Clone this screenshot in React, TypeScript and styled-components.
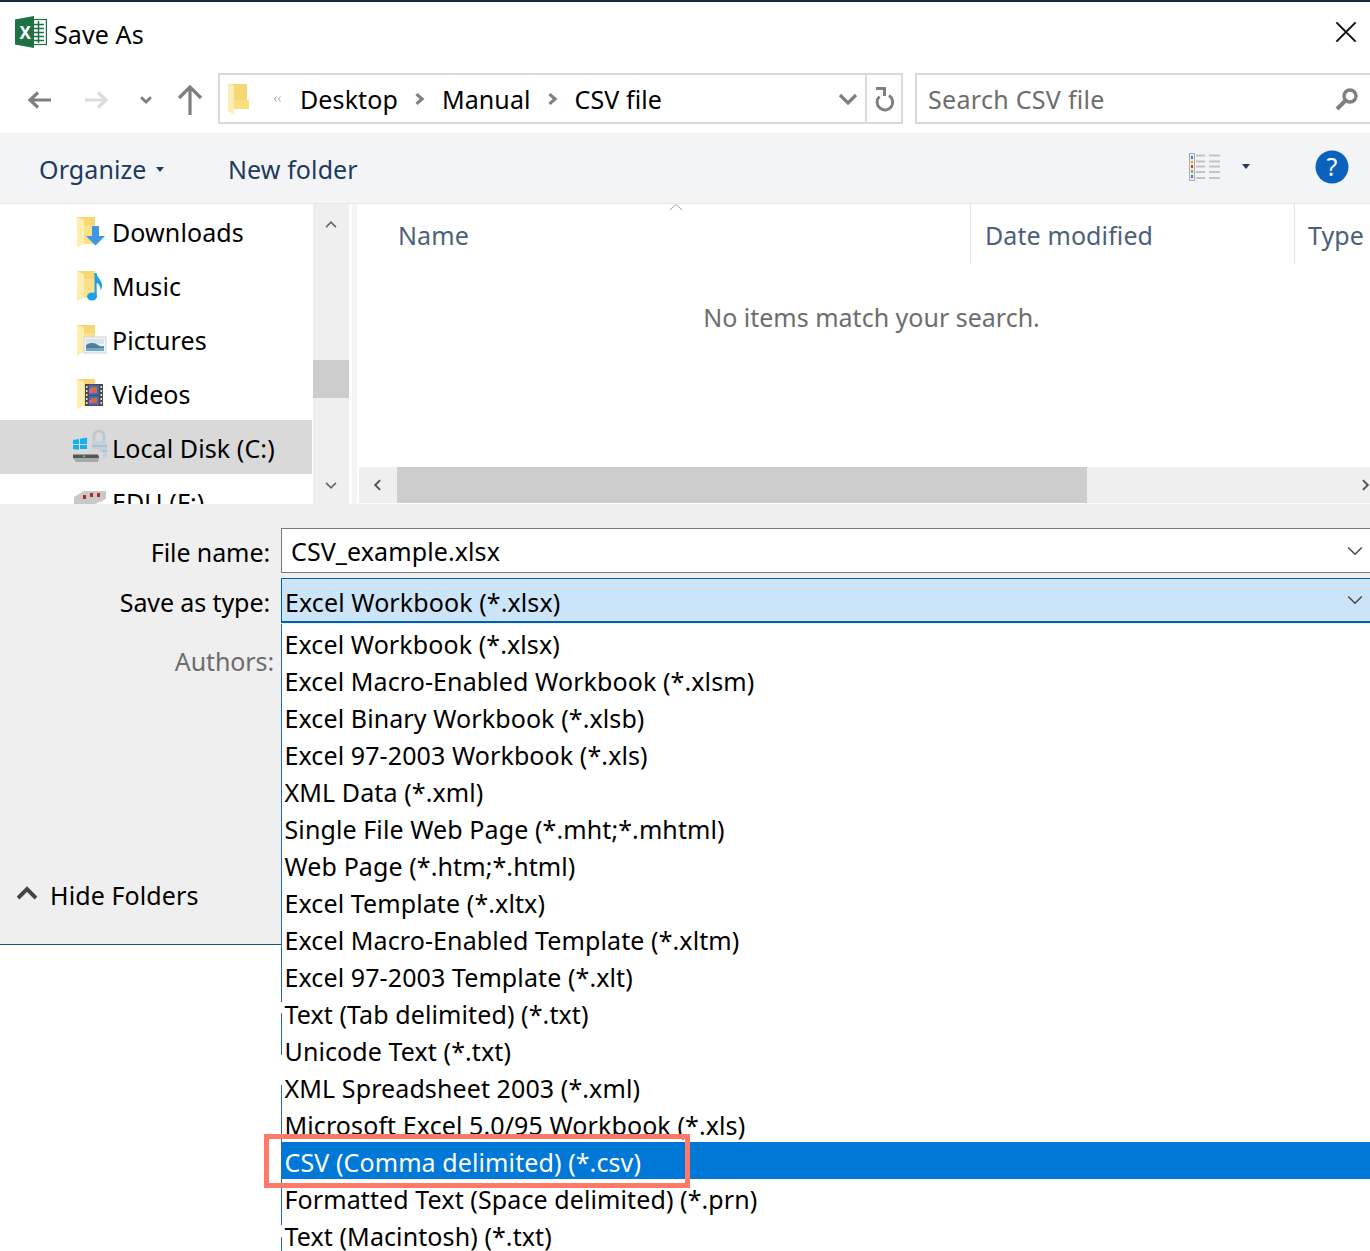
import React from "react";
import styled, { createGlobalStyle } from "styled-components";

const Global = createGlobalStyle`
  html, body { margin: 0; padding: 0; background: #fff; }
  body { font-family: "Noto Sans", "Open Sans", sans-serif; }
`;

const Page = styled.div`
  position: relative;
  width: 1370px;
  height: 1251px;
  overflow: hidden;
  background: #fff;
  border-top: 2px solid #1a2a3a;
  box-sizing: border-box;
  font-size: 25px;
  letter-spacing: 0.1px;
  color: #000;
`;

const TitleBar = styled.header`
  height: 68px;
  display: flex;
  align-items: center;
  padding: 0 12px 4px 15px;
  box-sizing: border-box;
  gap: 7px;
`;
const TitleText = styled.span`
  flex: 1;
`;
const LogoSlot = styled.span`
  display: flex;
  padding-bottom: 4px;
`;
const CloseSlot = styled.span`
  display: flex;
  padding-bottom: 4px;
`;

const NavBar = styled.nav`
  height: 63px;
  display: flex;
  align-items: flex-start;
  padding-top: 3px;
  box-sizing: border-box;
`;
const NavButtons = styled.div`
  width: 218px;
  height: 53px;
  display: flex;
  align-items: center;
  padding-left: 27px;
  box-sizing: border-box;
`;
const NavSlot = styled.span<{ $w: number }>`
  width: ${(p) => p.$w}px;
  display: flex;
`;
const AddressBox = styled.div`
  width: 685px;
  height: 51px;
  border: 2px solid #d9d9d9;
  box-sizing: border-box;
  display: flex;
  align-items: center;
  padding-left: 8px;
`;
const OverflowMark = styled.span`
  margin-left: 22px;
  display: flex;
`;
const Crumb = styled.span<{ $ml: number }>`
  margin-left: ${(p) => p.$ml}px;
`;
const CrumbSep = styled.span`
  margin-left: 15px;
  display: flex;
`;
const AddressTail = styled.div`
  margin-left: auto;
  height: 100%;
  display: flex;
  align-items: center;
`;
const Refresh = styled.span`
  width: 36px;
  height: 100%;
  border-left: 2px solid #d9d9d9;
  margin-left: 7px;
  padding-left: 4px;
  display: flex;
  align-items: center;
  justify-content: center;
  box-sizing: border-box;
`;
const SearchBox = styled.div`
  width: 455px;
  height: 51px;
  margin-left: 12px;
  border: 2px solid #d9d9d9;
  border-right: 0;
  box-sizing: border-box;
  display: flex;
  align-items: center;
  justify-content: space-between;
  padding: 0 11px 0 11px;
  letter-spacing: 0.3px;
  color: #6d6d6d;
`;

const CommandBar = styled.div`
  height: 71px;
  background: #f3f4f6;
  border-bottom: 1px solid #e6e7e9;
  box-sizing: border-box;
  display: flex;
  align-items: center;
  padding: 2px 21px 0 39px;
  color: #1e3a5f;
`;
const Command = styled.span<{ $w: number }>`
  width: ${(p) => p.$w}px;
  display: flex;
  align-items: center;
  gap: 9px;
`;
const CommandRight = styled.div`
  margin-left: auto;
  margin-top: -5px;
  display: flex;
  align-items: center;
`;
const ViewCaret = styled.span`
  margin: 0 65px 0 21px;
  display: flex;
`;

const Browser = styled.section`
  height: 300px;
  display: flex;
  overflow: hidden;
`;
const FolderPane = styled.div`
  width: 313px;
  flex: none;
  overflow: hidden;
`;
const FolderRow = styled.div<{ $selected?: boolean }>`
  height: 54px;
  width: 312px;
  display: flex;
  align-items: center;
  padding-top: 1px;
  background: ${(p) => (p.$selected ? "#d9d9d9" : "transparent")};
  box-sizing: border-box;
`;
const FolderIconSlot = styled.span`
  width: 112px;
  flex: none;
  display: flex;
  justify-content: flex-end;
  padding-right: 3px;
  box-sizing: border-box;
`;
const VScroll = styled.div`
  width: 36px;
  flex: none;
  background: #efefef;
  display: flex;
  flex-direction: column;
  align-items: center;
  justify-content: space-between;
  padding: 14px 0 12px;
  box-sizing: border-box;
  position: relative;
`;
const VThumb = styled.div`
  position: absolute;
  left: 0;
  top: 156px;
  width: 36px;
  height: 38px;
  background: #cdcdcd;
`;
const Splitter = styled.div`
  width: 8px;
  flex: none;
  border-left: 3px solid #fff;
  background: #f4f4f4;
  box-sizing: border-box;
`;
const FilePane = styled.div`
  flex: 1;
  min-width: 0;
  display: flex;
  flex-direction: column;
  position: relative;
`;
const HeaderRow = styled.div`
  height: 60px;
  display: flex;
  color: #4c607a;
  position: relative;
  flex: none;
`;
const SortCaret = styled.span`
  position: absolute;
  left: 310px;
  top: -3px;
  display: flex;
`;
const HeaderCell = styled.div<{ $w: number; $pl: number; $line?: boolean }>`
  width: ${(p) => p.$w}px;
  padding-left: ${(p) => p.$pl}px;
  padding-top: 1px;
  box-sizing: border-box;
  border-left: ${(p) => (p.$line ? "1px solid #e5e5e5" : "0")};
  display: flex;
  align-items: center;
  flex: none;
  white-space: nowrap;
`;
const EmptyNote = styled.div`
  flex: 1;
  text-align: center;
  color: #6d6d6d;
  letter-spacing: 0;
  padding: 36px 0 0 16px;
`;
const HScroll = styled.div`
  height: 36px;
  margin: 0 0 1px 2px;
  background: #efefef;
  display: flex;
  align-items: center;
  flex: none;
`;
const HArrow = styled.span`
  width: 38px;
  flex: none;
  display: flex;
  justify-content: center;
`;
const HThumb = styled.div`
  width: 690px;
  height: 36px;
  background: #cdcdcd;
`;
const HRight = styled.span`
  margin-left: auto;
  display: flex;
  margin-right: -2px;
`;

const Form = styled.section`
  height: 441px;
  background: #efefef;
  border-bottom: 1px solid #1a5280;
  box-sizing: border-box;
  width: 281px;
  position: relative;
  display: flex;
  flex-direction: column;
  padding-top: 24px;
`;
const FormStrip = styled.div`
  display: flex;
`;
const FormBg = styled.div`
  flex: 1;
  background: #efefef;
  height: 440px;
`;
const FieldRow = styled.div<{ $h: number }>`
  height: ${(p) => p.$h}px;
  display: flex;
  align-items: center;
  justify-content: flex-end;
`;
const Label = styled.label<{ $pr: number; $muted?: boolean }>`
  padding-right: ${(p) => p.$pr}px;
  color: ${(p) => (p.$muted ? "#6d6d6d" : "#000")};
  letter-spacing: -0.1px;
  white-space: nowrap;
`;
const HideFolders = styled.div`
  margin-top: auto;
  height: 66px;
  display: flex;
  align-items: flex-start;
  gap: 13px;
  padding-left: 17px;
`;
const HideIcon = styled.span`
  display: flex;
  padding-top: 6px;
`;
const Field = styled.div`
  position: absolute;
  left: 281px;
  right: 0;
  height: 45px;
  box-sizing: border-box;
  display: flex;
  align-items: center;
  justify-content: space-between;
  padding-right: 6px;
`;
const NameField = styled(Field)`
  top: 526px;
  background: #fff;
  border: 1px solid #7a7a7a;
  border-right: 0;
  padding-left: 9px;
`;
const TypeField = styled(Field)`
  top: 576px;
  background: #cce4f7;
  border: 1px solid #0060b0;
  border-bottom-width: 2px;
  border-right: 0;
  padding-left: 3px;
  padding-top: 4px;
`;
const TypeChevron = styled.span`
  display: flex;
  margin-top: -4px;
`;
const Dropdown = styled.ul`
  position: absolute;
  left: 281px;
  right: 0;
  top: 622px;
  margin: 0;
  padding: 0;
  list-style: none;
  background: #fff;
`;
const Edge = styled.i<{ $top: number; $h: number }>`
  position: absolute;
  left: 0;
  width: 1px;
  top: ${(p) => p.$top}px;
  height: ${(p) => p.$h}px;
  background: #1f6fb5;
  z-index: 1;
`;
const Option = styled.li<{ $active?: boolean }>`
  height: 37px;
  display: flex;
  align-items: center;
  padding: 2px 0 0 3.5px;
  box-sizing: border-box;
  white-space: nowrap;
  background: ${(p) => (p.$active ? "#0078d7" : "transparent")};
  color: ${(p) => (p.$active ? "#fff" : "#000")};
`;
const Callout = styled.div`
  position: absolute;
  left: 264px;
  top: 1132px;
  width: 426px;
  height: 54px;
  border: 5px solid #ff7a66;
  box-sizing: border-box;
  z-index: 2;
`;

const ExcelIcon = () => (
  <svg width="32" height="32" viewBox="0 0 32 32">
    <rect x="15" y="3.5" width="16.4" height="25" fill="#fff" stroke="#1e7145" strokeWidth="1.2" />
    <path d="M19 8.500h10M19 12.500h10M19 16.500h10M19 20.500h10M19 24.500h10M23.500 5v22" stroke="#1e7145" strokeWidth="1.5" />
    <path d="M0 3.500L19 0v32L0 28.500z" fill="#1e7145" />
    <text x="4.500" y="22.500" fill="#fff" fontSize="17" fontWeight="700" fontFamily="Noto Sans">X</text>
  </svg>
);
const Chev = ({ d, c = "#7f7f7f", w = 3, size = 20 }: { d: string; c?: string; w?: number; size?: number }) => (
  <svg width={size} height={size} viewBox="0 0 20 20"><path d={d} fill="none" stroke={c} strokeWidth={w} /></svg>
);
const ArrowH = ({ back, c }: { back?: boolean; c: string }) => (
  <svg width="24" height="20" viewBox="0 0 24 20">
    <path d={back ? "M2 10h22M11 2.500L3 10l8 7.500" : "M0 10h22M13 2.500l8 7.500-8 7.500"} fill="none" stroke={c} strokeWidth="3.200" />
  </svg>
);
const UpArrow = () => (
  <svg width="26" height="32" viewBox="0 0 26 32"><path d="M13 31V3M2 14L13 3l11 11" fill="none" stroke="#7f7f7f" strokeWidth="3.200" /></svg>
);
const BigFolder = () => (
  <svg width="22" height="32" viewBox="0 0 22 32">
    <path d="M0 1h19v16H0z" fill="#f7d774" />
    <path d="M6 17h15v9H6z" fill="#fce07f" />
    <path d="M0 1l6 1v30l-6-4z" fill="#fdeeb4" />
  </svg>
);
const Folder = ({ children }: { children?: React.ReactNode }) => (
  <svg width="34" height="32" viewBox="-1 0 34 32">
    <path d="M1 1h18v27H6L1 31z" fill="#f7d774" />
    <path d="M1 1l7 3v24l-7 3z" fill="#fdeeb0" />
    <path d="M8 9h11v19H8z" fill="#fbe08a" />
    {children}
  </svg>
);
const FolderDownload = () => (
  <Folder><path d="M16 10h7v10h6L19.500 29.500 10 20h6z" fill="#3c98e4" /></Folder>
);
const FolderMusic = () => (
  <Folder>
    <ellipse cx="16" cy="26.500" rx="5" ry="4" fill="#1f9fe8" />
    <path d="M18.500 26V3h2.200c.3 5 5.300 7 5.300 12.500 0 2-.7 3.500-1.600 4.500.5-4.200-2-6.300-3.700-7.300V26z" fill="#1f9fe8" />
  </Folder>
);
const FolderPicture = () => (
  <Folder>
    <rect x="8" y="13" width="22" height="16" fill="#f3f3f3" stroke="#cfd3d6" />
    <path d="M10 15h18v5H10z" fill="#d5e3ee" />
    <path d="M10 21c5-3 9-2 12 0s4 1 6 1v5H10z" fill="#4f8291" />
    <path d="M10 24h18v3H10z" fill="#6fa7cf" />
  </Folder>
);
const FolderVideo = () => (
  <Folder>
    <rect x="9" y="6" width="18" height="22" fill="#4a4a4a" />
    <path d="M13 7h10v10H13z" fill="#3d69c4" />
    <path d="M13 18h10v9H13z" fill="#3d69c4" />
    <path d="M15 9h6v6h-6zM15 20h6v5h-6z" fill="#d66a2e" />
    <path d="M13 11h3v4h-3zM13 22h3v3h-3z" fill="#d65fb0" />
    <path d="M10 8h1.500v2H10zM10 12h1.500v2H10zM10 16h1.500v2H10zM10 20h1.500v2H10zM10 24h1.500v2H10zM24.500 8H26v2h-1.500zM24.500 12H26v2h-1.500zM24.500 16H26v2h-1.500zM24.500 20H26v2h-1.500zM24.500 24H26v2h-1.500z" fill="#e5e5e5" />
  </Folder>
);
const DiskIcon = () => (
  <svg width="36" height="32" viewBox="0 2 36 32" overflow="visible">
    <path d="M0 10l6-1v5H0zM7 8.800l7-1.200V14H7zM0 15h6v5l-6-1zM7 15h7v6.400l-7-1.200z" fill="#12b0f0" />
    <path d="M21 11V6a5 5 0 0 1 10 0v6" fill="none" stroke="#bcc7cd" strokeWidth="2.400" />
    <rect x="19" y="11" width="15" height="17" rx="2" fill="#c4d2da" />
    <path d="M19 16h15M19 21h15" stroke="#8fb0c8" strokeWidth="1.200" />
    <path d="M0 24l6-5h20l4 3v5l-4 5H3l-3-4z" fill="#d9d9d9" />
    <path d="M0 24.500h25l1 2.500v1H0z" fill="#565656" />
    <path d="M0 28h26l-1 4H3z" fill="#a8a8a8" />
    <circle cx="11" cy="26.300" r="1.100" fill="#4fd24f" />
  </svg>
);
const DriveIcon = () => (
  <svg width="36" height="32" viewBox="0 0 36 32">
    <path d="M1 11l10-6h22v8L22 18H1z" fill="#c9c9c9" />
    <path d="M17 7h3v4h-3zM24 7h3v4h-3zM10 9h3v4h-3z" fill="#b02a2a" />
  </svg>
);
const ViewsIcon = () => (
  <svg width="32" height="28" viewBox="0 0 32 28">
    <rect x="0.500" y="0.500" width="5" height="27" fill="#eee" stroke="#aaa" />
    <path d="M2 3h2v3H2z" fill="#3a7bd5" /><path d="M2 8h2v2H2z" fill="#d9a032" /><path d="M2 12h2v3H2z" fill="#d93a2b" /><path d="M2 17h2v3H2z" fill="#7ab648" /><path d="M2 22h2v3H2z" fill="#3a7bd5" />
    <path d="M7 2.500h9M20 2.500h11M7 8.500h9M20 8.500h11M7 13.500h9M20 13.500h11M7 19h9M20 19h11M7 25h9M20 25h11" stroke="#c4c4c4" strokeWidth="1.800" />
  </svg>
);
const HelpIcon = () => (
  <svg width="34" height="34" viewBox="0 0 34 34">
    <circle cx="17" cy="17" r="16.500" fill="#0a62bd" />
    <text x="17" y="26" textAnchor="middle" fill="#fff" fontSize="25" fontFamily="Noto Sans">?</text>
  </svg>
);
const RefreshIcon = () => (
  <svg width="22" height="26" viewBox="0 0 22 26">
    <path d="M14 9.500A7.800 7.800 0 1 1 4.500 10.500" fill="none" stroke="#7f7f7f" strokeWidth="3" />
    <path d="M1 2.500h8.500V10" fill="none" stroke="#7f7f7f" strokeWidth="3" />
  </svg>
);
const SearchIcon = () => (
  <svg width="24" height="24" viewBox="0 0 24 24">
    <circle cx="15" cy="9" r="6" fill="none" stroke="#7f7f7f" strokeWidth="3.400" />
    <path d="M10.500 13.500L2 22" stroke="#7f7f7f" strokeWidth="4" />
  </svg>
);
const Caret = ({ c = "#1e3a5f" }: { c?: string }) => (
  <svg width="8" height="5" viewBox="0 0 8 5"><path d="M0 0h8L4 5z" fill={c} /></svg>
);

const options = [
  "Excel Workbook (*.xlsx)",
  "Excel Macro-Enabled Workbook (*.xlsm)",
  "Excel Binary Workbook (*.xlsb)",
  "Excel 97-2003 Workbook (*.xls)",
  "XML Data (*.xml)",
  "Single File Web Page (*.mht;*.mhtml)",
  "Web Page (*.htm;*.html)",
  "Excel Template (*.xltx)",
  "Excel Macro-Enabled Template (*.xltm)",
  "Excel 97-2003 Template (*.xlt)",
  "Text (Tab delimited) (*.txt)",
  "Unicode Text (*.txt)",
  "XML Spreadsheet 2003 (*.xml)",
  "Microsoft Excel 5.0/95 Workbook (*.xls)",
  "CSV (Comma delimited) (*.csv)",
  "Formatted Text (Space delimited) (*.prn)",
  "Text (Macintosh) (*.txt)",
];

const folders: { name: string; icon: React.ReactNode; selected?: boolean }[] = [
  { name: "Downloads", icon: <FolderDownload /> },
  { name: "Music", icon: <FolderMusic /> },
  { name: "Pictures", icon: <FolderPicture /> },
  { name: "Videos", icon: <FolderVideo /> },
  { name: "Local Disk (C:)", icon: <DiskIcon />, selected: true },
  { name: "EDU (F:)", icon: <DriveIcon /> },
];

const DownChev = () => <Chev size={18} c="#444" w={1.600} d="M2.500 6l7.500 7.500L17.500 6" />;
const CrumbChev = () => <Chev size={14} w={4.500} d="M5 3l8 7-8 7" />;

export default function App() {
  return (
    <Page>
      <Global />
      <TitleBar>
        <LogoSlot><ExcelIcon /></LogoSlot>
        <TitleText>Save As</TitleText>
        <CloseSlot><Chev size={24} c="#111" w={1.700} d="M2 2l16 16M18 2L2 18" /></CloseSlot>
      </TitleBar>
      <NavBar>
        <NavButtons>
          <NavSlot $w={58}><ArrowH back c="#7f7f7f" /></NavSlot>
          <NavSlot $w={54}><ArrowH c="#dcdcdc" /></NavSlot>
          <NavSlot $w={38}><Chev size={14} d="M3 6l7 7 7-7" w={4} /></NavSlot>
          <UpArrow />
        </NavButtons>
        <AddressBox>
          <BigFolder />
          <OverflowMark><Chev size={10} c="#888" w={1.600} d="M9 5L5 10l4 5M17 5l-4 5 4 5" /></OverflowMark>
          <Crumb $ml={18}>Desktop</Crumb>
          <CrumbSep><CrumbChev /></CrumbSep>
          <Crumb $ml={15}>Manual</Crumb>
          <CrumbSep><CrumbChev /></CrumbSep>
          <Crumb $ml={15}>CSV file</Crumb>
          <AddressTail>
            <Chev d="M2 6l8 8 8-8" w={3.200} />
            <Refresh><RefreshIcon /></Refresh>
          </AddressTail>
        </AddressBox>
        <SearchBox>
          <span>Search CSV file</span>
          <SearchIcon />
        </SearchBox>
      </NavBar>
      <CommandBar>
        <Command $w={189}>Organize <Caret /></Command>
        <Command $w={200}>New folder</Command>
        <CommandRight>
          <ViewsIcon />
          <ViewCaret><Caret /></ViewCaret>
          <HelpIcon />
        </CommandRight>
      </CommandBar>
      <Browser>
        <FolderPane>
          {folders.map((f) => (
            <FolderRow key={f.name} $selected={f.selected}>
              <FolderIconSlot>{f.icon}</FolderIconSlot>
              {f.name}
            </FolderRow>
          ))}
        </FolderPane>
        <VScroll>
          <VThumb />
          <Chev size={14} c="#666" w={2.400} d="M3 13l7-7 7 7" />
          <Chev size={14} c="#666" w={2.400} d="M3 7l7 7 7-7" />
        </VScroll>
        <Splitter />
        <FilePane>
          <HeaderRow>
            <SortCaret><Chev size={18} c="#999" w={1} d="M3 10l7-6 7 6" /></SortCaret>
            <HeaderCell $w={613} $pl={41}>Name</HeaderCell>
            <HeaderCell $w={324} $pl={14} $line>Date modified</HeaderCell>
            <HeaderCell $w={76} $pl={13} $line>Type</HeaderCell>
          </HeaderRow>
          <EmptyNote>No items match your search.</EmptyNote>
          <HScroll>
            <HArrow><Chev size={14} c="#555" w={2.800} d="M13 3l-7 7 7 7" /></HArrow>
            <HThumb />
            <HRight><Chev size={14} c="#555" w={2.800} d="M7 3l7 7-7 7" /></HRight>
          </HScroll>
        </FilePane>
      </Browser>
      <FormStrip>
        <Form>
          <FieldRow $h={48}><Label $pr={11}>File name:</Label></FieldRow>
          <FieldRow $h={52}><Label $pr={11}>Save as type:</Label></FieldRow>
          <FieldRow $h={66}><Label $pr={7} $muted>Authors:</Label></FieldRow>
          <HideFolders>
            <HideIcon><Chev size={20} c="#444" w={4} d="M1 14l9-9 9 9" /></HideIcon>
            Hide Folders
          </HideFolders>
        </Form>
        <FormBg />
      </FormStrip>
      <NameField>CSV_example.xlsx<DownChev /></NameField>
      <TypeField>Excel Workbook (*.xlsx)<TypeChevron><DownChev /></TypeChevron></TypeField>
      <Dropdown>
        <Edge $top={0} $h={378} />
        <Edge $top={389} $h={42} />
        <Edge $top={461} $h={140} />
        <Edge $top={613} $h={20} />
        {options.map((o) => (
          <Option key={o} $active={o.startsWith("CSV")}>{o}</Option>
        ))}
      </Dropdown>
      <Callout />
    </Page>
  );
}
